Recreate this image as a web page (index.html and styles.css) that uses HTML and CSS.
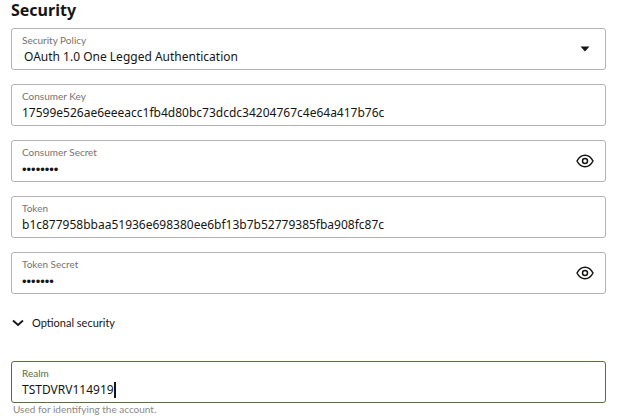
FILE: index.html
```html
<!DOCTYPE html>
<html lang="en">
<head>
    <meta charset="UTF-8">
    <meta name="viewport" content="width=device-width, initial-scale=1.0">
    <title>Security</title>
    <link rel="stylesheet" href="styles.css">
</head>
<body>
    <form class="security-form">
        <h1>Security</h1>

        <div class="field">
            <div class="field-text">
                <label for="policy">Security Policy</label>
                <select id="policy" name="policy">
                    <option>OAuth 1.0 One Legged Authentication</option>
                </select>
            </div>
            <svg class="arrow" viewBox="0 0 10 6" aria-hidden="true"><path d="M0.5 0.5h9L5 5.5z" fill="#161513"/></svg>
        </div>

        <div class="field">
            <div class="field-text">
                <label for="consumerKey">Consumer Key</label>
                <input type="text" id="consumerKey" name="consumerKey" value="17599e526ae6eeeacc1fb4d80bc73dcdc34204767c4e64a417b76c">
            </div>
        </div>

        <div class="field">
            <div class="field-text">
                <label for="consumerSecret">Consumer Secret</label>
                <input type="password" id="consumerSecret" name="consumerSecret" value="password">
            </div>
            <button type="button" class="reveal" aria-label="Show consumer secret">
                <svg viewBox="0 0 18 14" fill="none" stroke="#161513" stroke-width="1.5">
                    <path d="M1 7C3 3.2 5.8 1.2 9 1.2S15 3.2 17 7c-2 3.8-4.8 5.8-8 5.8S3 10.8 1 7z"/>
                    <circle cx="9" cy="7" r="2.5"/>
                </svg>
            </button>
        </div>

        <div class="field">
            <div class="field-text">
                <label for="token">Token</label>
                <input type="text" id="token" name="token" value="b1c877958bbaa51936e698380ee6bf13b7b52779385fba908fc87c">
            </div>
        </div>

        <div class="field">
            <div class="field-text">
                <label for="tokenSecret">Token Secret</label>
                <input type="password" id="tokenSecret" name="tokenSecret" value="secret1">
            </div>
            <button type="button" class="reveal" aria-label="Show token secret">
                <svg viewBox="0 0 18 14" fill="none" stroke="#161513" stroke-width="1.5">
                    <path d="M1 7C3 3.2 5.8 1.2 9 1.2S15 3.2 17 7c-2 3.8-4.8 5.8-8 5.8S3 10.8 1 7z"/>
                    <circle cx="9" cy="7" r="2.5"/>
                </svg>
            </button>
        </div>

        <button type="button" class="section-toggle" aria-expanded="true">
            <svg viewBox="0 0 12 8" fill="none" stroke="#161513" stroke-width="1.8"><path d="M1 1.5l5 4.5 5-4.5"/></svg>
            <span>Optional security</span>
        </button>

        <div class="field active">
            <div class="field-text">
                <label for="realm">Realm</label>
                <div class="typing">
                    <input type="text" id="realm" name="realm" value="TSTDVRV114919" aria-describedby="realmHint">
                    <span class="caret"></span>
                </div>
            </div>
        </div>
        <p class="hint" id="realmHint">Used for identifying the account.</p>
    </form>
</body>
</html>
```

FILE: styles.css
```css
body {
    margin: 0;
    font-family: Lato, "Noto Sans", sans-serif;
    font-size: 12px;
    color: #161513;
    background-color: #ffffff;
}
.security-form {
    padding: 0 16px 0 11px;
}
h1 {
    margin: 0 0 7px;
    font-family: "Noto Sans", sans-serif;
    font-size: 16px;
    line-height: 21px;
    font-weight: 700;
}
.field {
    display: flex;
    align-items: center;
    box-sizing: border-box;
    height: 42px;
    margin-bottom: 14px;
    padding: 0 11px 0 10px;
    border: 1px solid #b3b2b1;
    border-radius: 3px;
}
.field-text {
    flex: 1;
    min-width: 0;
    padding-top: 2px;
}
label {
    display: block;
    font-size: 10px;
    line-height: 14px;
    color: #75736f;
}
input,
select {
    display: block;
    box-sizing: border-box;
    width: 100%;
    height: 20px;
    margin: 0;
    padding: 0;
    border: none;
    outline: none;
    background: none;
    font-family: "Noto Sans", sans-serif;
    font-size: 12px;
    line-height: 20px;
    color: inherit;
}
select {
    appearance: none;
    padding-left: 2px;
}
input[type="password"] {
    padding-top: 2px;
    font-family: "Liberation Sans", Arial, sans-serif;
    font-size: 13px;
}
.arrow {
    width: 10px;
    height: 6px;
    margin-right: 4px;
}
button {
    margin: 0;
    padding: 0;
    border: none;
    background: none;
    font: inherit;
    color: inherit;
    cursor: pointer;
}
.reveal svg {
    display: block;
    width: 18px;
    height: 14px;
}
.section-toggle {
    display: flex;
    align-items: center;
    gap: 8px;
    margin: 20px 0 29px 1px;
    font-size: 11px;
    line-height: 18px;
}
.section-toggle svg {
    width: 12px;
    height: 8px;
}
.field.active {
    margin-bottom: 0;
    border-color: #56703f;
}
.active label {
    color: #56703f;
}
.typing {
    display: flex;
    align-items: center;
}
.typing input {
    width: auto;
    field-sizing: content;
}
.caret {
    width: 2px;
    height: 16px;
    background-color: #161513;
}
.hint {
    margin: 0;
    padding-left: 2px;
    font-size: 10px;
    line-height: 13px;
    color: #8b8985;
}
```
